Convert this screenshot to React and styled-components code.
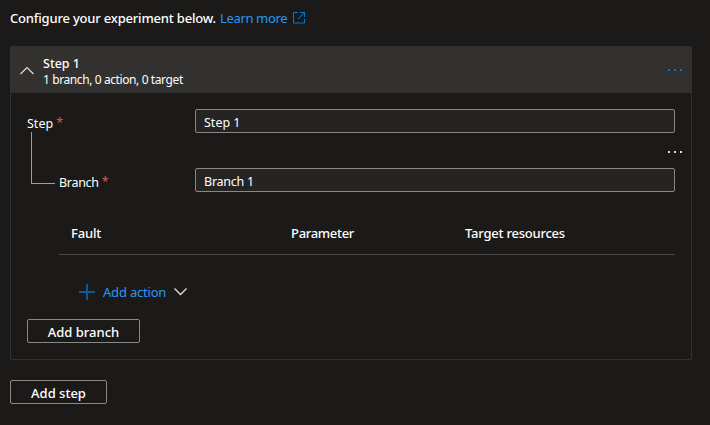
import React from "react";
import styled, { createGlobalStyle } from "styled-components";

const GlobalStyle = createGlobalStyle`
  * { box-sizing: border-box; }
  body {
    margin: 0;
    background: #1b1a19;
    color: #fff;
    font: 400 13px/18px "Noto Sans", "Open Sans", sans-serif;
    overflow: hidden;
  }
  button, input { font: inherit; color: inherit; margin: 0; }
  svg { display: block; flex: none; }
`;

const Page = styled.main`
  width: 710px;
  height: 425px;
  padding: 9px 18px 0 10px;
  display: flex;
  flex-direction: column;
  align-items: flex-start;
`;

const Text = styled.span`
  white-space: pre;
  font-size: ${(p) => p.$size || 13}px;
  font-weight: ${(p) => p.$weight || 400};
  letter-spacing: ${(p) => p.$track || 0}px;
`;

const Intro = styled.div`
  display: flex;
  height: 18px;
  margin-bottom: 19px;
`;

const IntroText = styled(Text)`
  width: 206px;
`;

const Link = styled.a`
  display: flex;
  margin-left: 4px;
  color: #2899f5;
  svg { margin: 3px 0 0 6px; }
`;

const LinkText = styled(Text)`
  width: 67px;
`;

const Panel = styled.section`
  width: 682px;
  height: 314px;
  border: 1px solid #2f3237;
  border-radius: 2px;
`;

const PanelHeader = styled.header`
  height: 46px;
  padding: 0 8px 0 9px;
  display: flex;
  align-items: center;
  background: #323130;
`;

const Titles = styled.div`
  flex: 1;
  display: flex;
  flex-direction: column;
  margin-left: 9px;
  padding-top: 4px;
  line-height: 16px;
`;

const PanelBody = styled.div`
  padding: 16px 16px 0;
`;

const Field = styled.div`
  display: flex;
  height: 24px;
`;

const Label = styled.label`
  width: ${(p) => (p.$nested ? 136 : 168)}px;
  padding-top: 6px;
  display: flex;
  gap: 3px;
`;

const Required = styled.span`
  color: #d8565e;
  font-size: 12.5px;
  line-height: 16px;
`;

const Input = styled.input`
  width: 480px;
  height: 24px;
  padding: 2px 8px 0;
  border: 1px solid #8a8886;
  border-radius: 2px;
  background: #252423;
  font-size: 12.5px;
  letter-spacing: ${(p) => p.$track || 0}px;
  outline: none;
`;

const BranchArea = styled.div`
  display: flex;
`;

const Connector = styled.div`
  width: 24px;
  height: 52px;
  margin: -1px 4px 0 4px;
  border-left: 1px solid #a19f9d;
  border-bottom: 1px solid #a19f9d;
`;

const Branch = styled.div`
  flex: 1;
`;

const MoreRow = styled.div`
  height: 35px;
  padding: 18px 0 0;
  display: flex;
  justify-content: flex-end;
  svg { margin-right: -8px; }
`;

const TableHead = styled.div`
  height: 63px;
  padding: 32px 0 0 12px;
  display: grid;
  grid-template-columns: 220px 174px 1fr;
  border-bottom: 1px solid #484644;
`;

const ActionButton = styled.button`
  height: 18px;
  margin-top: 28px;
  padding: 0 0 0 20px;
  display: flex;
  align-items: center;
  border: 0;
  background: none;
  color: #2899f5;
`;

const ActionLabel = styled.span`
  width: 63px;
  margin: 0 8px;
  white-space: pre;
  text-align: left;
  letter-spacing: -0.2px;
`;

const Button = styled.button`
  width: ${(p) => p.$width}px;
  height: 24px;
  margin-top: ${(p) => p.$top}px;
  padding: 1px 0 0;
  display: flex;
  align-items: center;
  justify-content: center;
  border: 1px solid #8a8886;
  border-radius: 2px;
  background: transparent;
`;

const Dots = ({ color }) => (
  <svg width="15" height="2" fill={color} shapeRendering="crispEdges">
    <rect width="2" height="2" />
    <rect x="6" width="2" height="2" />
    <rect x="12" width="2" height="2" />
  </svg>
);

const ExternalIcon = () => (
  <svg width="12" height="12" fill="none" stroke="#0078d4">
    <path d="M5 .5H.5v10.500h11V7M7 .5h4.500V5M11.500 .5L5 7" />
  </svg>
);

const UpIcon = () => (
  <svg width="14" height="9" fill="none" stroke="#e1dfdd" strokeWidth="1.2">
    <path d="M.5 8L7 1.500L13.500 8" />
  </svg>
);

const DownIcon = () => (
  <svg width="13" height="9" fill="none" stroke="#e1dfdd" strokeWidth="1.3">
    <path d="M.5 .5L6.500 6.500L12.500 .5" />
  </svg>
);

const PlusIcon = () => (
  <svg width="16" height="16" fill="none" stroke="#0c5a99" strokeWidth="2">
    <path d="M8 0V16M0 8H16" />
  </svg>
);

export default function App() {
  return (
    <>
      <GlobalStyle />
      <Page>
        <Intro>
          <IntroText $weight={500} $track={-0.19}>Configure your experiment below.</IntroText>
          <Link>
            <LinkText $track={-0.35}>Learn more</LinkText>
            <ExternalIcon />
          </Link>
        </Intro>
        <Panel>
          <PanelHeader>
            <UpIcon />
            <Titles>
              <Text $weight={500} $size={12.5}>Step 1</Text>
              <Text $size={12} $track={-0.4}>1 branch, 0 action, 0 target</Text>
            </Titles>
            <Dots color="#0078d4" />
          </PanelHeader>
          <PanelBody>
            <Field>
              <Label>
                <Text $size={12.5}>Step</Text>
                <Required>*</Required>
              </Label>
              <Input defaultValue="Step 1" />
            </Field>
            <BranchArea>
              <Connector />
              <Branch>
                <MoreRow>
                  <Dots color="#e1dfdd" />
                </MoreRow>
                <Field>
                  <Label $nested>
                    <Text $size={12.5} $track={-0.3}>Branch</Text>
                    <Required>*</Required>
                  </Label>
                  <Input defaultValue="Branch 1" $track={-0.25} />
                </Field>
                <TableHead>
                  <Text $weight={500} $track={-0.15}>Fault</Text>
                  <Text $weight={500} $track={-0.3}>Parameter</Text>
                  <Text $weight={500} $track={-0.22}>Target resources</Text>
                </TableHead>
                <ActionButton>
                  <PlusIcon />
                  <ActionLabel>Add action</ActionLabel>
                  <DownIcon />
                </ActionButton>
              </Branch>
            </BranchArea>
            <Button $width={113} $top={18}>
              <Text $weight={500}>Add branch</Text>
            </Button>
          </PanelBody>
        </Panel>
        <Button $width={97} $top={20}>
          <Text $weight={500}>Add step</Text>
        </Button>
      </Page>
    </>
  );
}
